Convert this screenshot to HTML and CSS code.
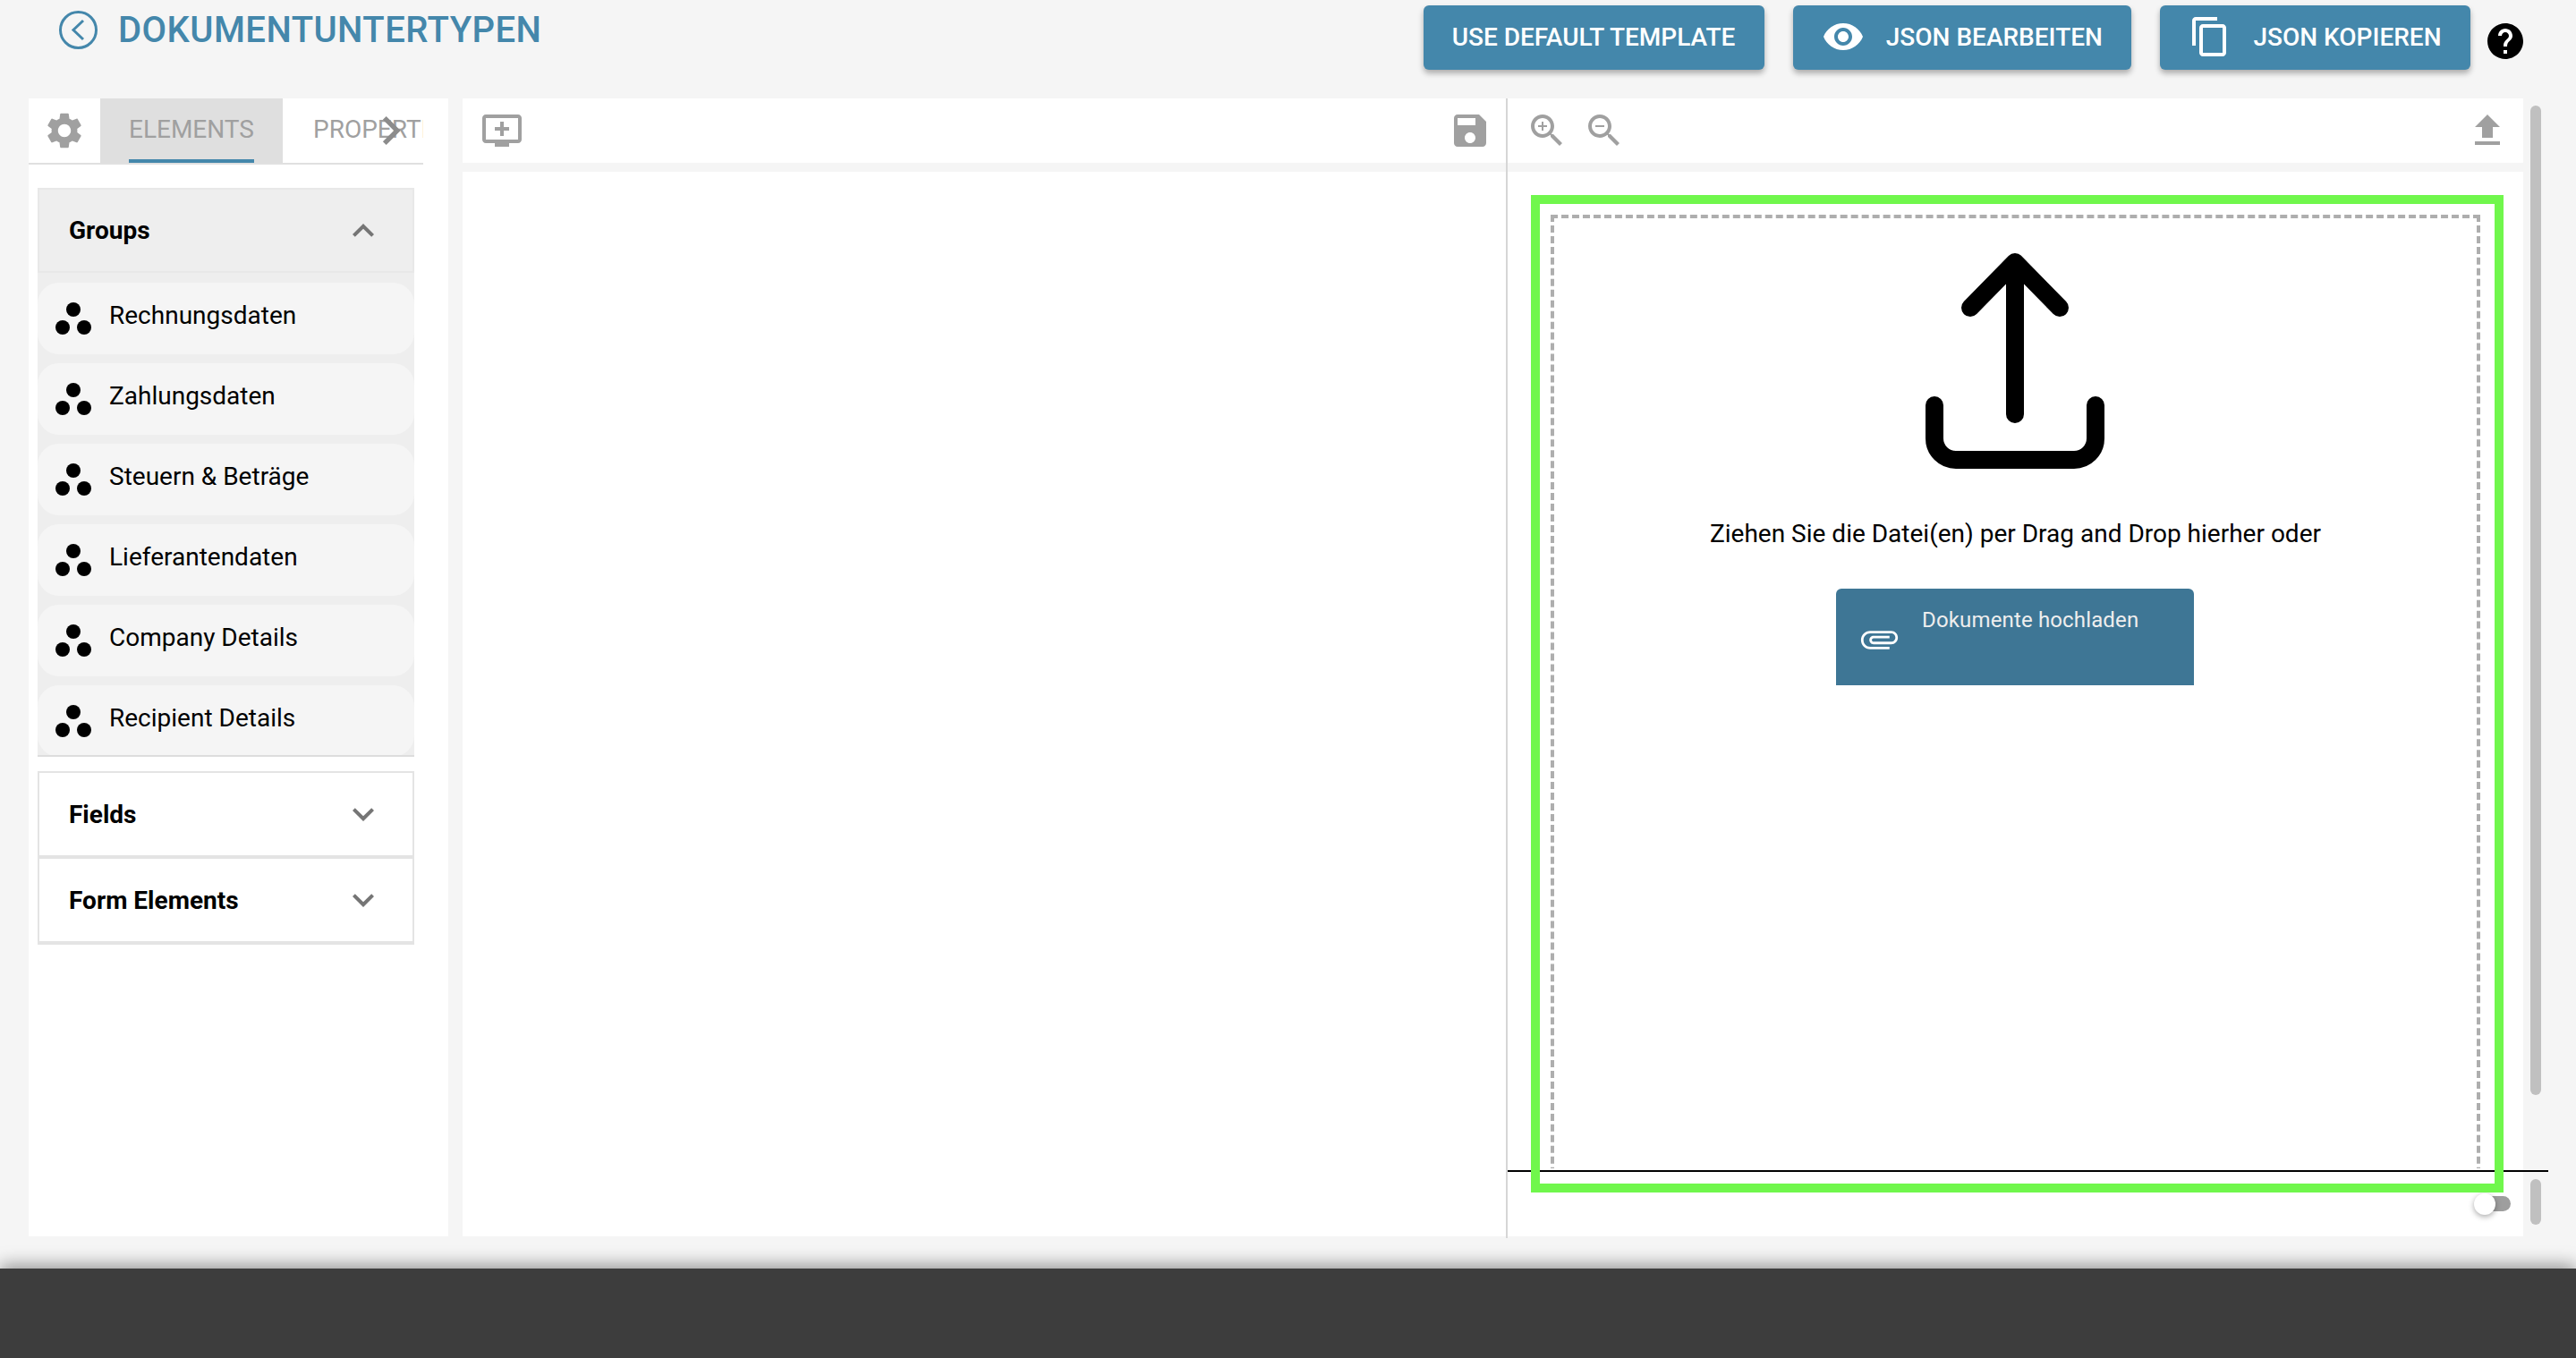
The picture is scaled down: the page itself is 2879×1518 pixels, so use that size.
FILE: index.html
```html
<!DOCTYPE html>
<html>
	<head>
		<meta charset="utf-8">
		<title>Dokumentuntertypen</title>
		<link rel="stylesheet" href="styles.css">
	</head>
	<body>
		<header class="topbar">
			<svg class="back-icon" viewBox="0 0 43 43"><circle cx="21.5" cy="21.5" r="20"/><path d="M27 11 16 21.500 27 32"/></svg>
			<h1 class="page-title">DOKUMENTUNTERTYPEN</h1>
			<div class="actions">
				<button class="action-btn">USE DEFAULT TEMPLATE</button>
				<button class="action-btn">
					<svg class="icon" viewBox="0 0 24 24"><path d="M12 4.500C7 4.500 2.730 7.610 1 12c1.730 4.390 6 7.500 11 7.500s9.270-3.110 11-7.500c-1.730-4.390-6-7.500-11-7.500zM12 17c-2.760 0-5-2.240-5-5s2.240-5 5-5 5 2.240 5 5-2.240 5-5 5zm0-8c-1.660 0-3 1.340-3 3s1.340 3 3 3 3-1.340 3-3-1.340-3-3-3z"/></svg>
					JSON BEARBEITEN
				</button>
				<button class="action-btn">
					<svg class="icon" viewBox="0 0 24 24"><path d="M16 1H4c-1.100 0-2 .9-2 2v14h2V3h12V1zm3 4H8c-1.100 0-2 .9-2 2v14c0 1.100.9 2 2 2h11c1.100 0 2-.9 2-2V7c0-1.100-.9-2-2-2zm0 16H8V7h11v14z"/></svg>
					JSON KOPIEREN
				</button>
			</div>
			<svg class="icon help-icon" viewBox="0 0 24 24"><circle cx="12" cy="12" r="7" fill="#fff"/><path d="M12 2C6.480 2 2 6.480 2 12s4.480 10 10 10 10-4.480 10-10S17.520 2 12 2zm1 17h-2v-2h2v2zm2.070-7.750l-.9.920C13.450 12.900 13 13.500 13 15h-2v-.5c0-1.100.45-2.100 1.170-2.830l1.240-1.260c.37-.36.59-.86.59-1.410 0-1.100-.9-2-2-2s-2 .9-2 2H8c0-2.210 1.790-4 4-4s4 1.790 4 4c0 .88-.36 1.680-.93 2.250z"/></svg>
		</header>

		<main class="workspace">
			<aside class="sidebar">
				<nav class="tabs">
					<span class="tab-gear">
						<svg class="icon" viewBox="0 0 24 24"><path d="M19.140 12.940c.04-.3.06-.61.06-.94 0-.32-.02-.64-.07-.94l2.030-1.580c.18-.14.23-.41.12-.61l-1.920-3.320c-.12-.22-.37-.29-.59-.22l-2.390.96c-.5-.38-1.030-.7-1.620-.94l-.36-2.540c-.04-.24-.24-.41-.48-.41h-3.840c-.24 0-.43.17-.47.41l-.36 2.540c-.59.24-1.130.57-1.620.94l-2.390-.96c-.22-.08-.47 0-.59.22L2.740 8.870c-.12.21-.08.47.12.61l2.030 1.580c-.05.3-.09.63-.09.94s.02.64.07.94l-2.030 1.580c-.18.14-.23.41-.12.61l1.920 3.320c.12.22.37.29.59.22l2.390-.96c.5.38 1.030.7 1.620.94l.36 2.540c.05.24.24.41.48.41h3.840c.24 0 .44-.17.47-.41l.36-2.540c.59-.24 1.130-.56 1.620-.94l2.390.96c.22.08.47 0 .59-.22l1.920-3.320c.12-.22.07-.47-.12-.61l-2.010-1.580zM12 15.600c-1.980 0-3.600-1.620-3.600-3.600s1.620-3.600 3.600-3.600 3.600 1.620 3.600 3.600-1.620 3.600-3.600 3.600z"/></svg>
					</span>
					<a class="tab tab-active"><span class="tab-label">ELEMENTS</span></a>
					<a class="tab tab-second"><span class="tab-label">PROPERTIES</span></a>
					<svg class="tabs-next" viewBox="0 0 24 24"><path d="M10 6 8.590 7.410 13.170 12l-4.580 4.590L10 18l6-6z"/></svg>
				</nav>

				<section class="group group-open">
					<div class="group-head">
						<span>Groups</span>
						<svg class="icon chevron" viewBox="0 0 24 24"><path d="M12 8l-6 6 1.410 1.410L12 10.830l4.590 4.580L18 14z"/></svg>
					</div>
					<ul class="group-list">
						<li class="group-item"><svg class="dots" viewBox="0 0 40 36"><circle cx="20" cy="8" r="8"/><circle cx="8" cy="28" r="8"/><circle cx="32" cy="28" r="8"/></svg>Rechnungsdaten</li>
						<li class="group-item"><svg class="dots" viewBox="0 0 40 36"><circle cx="20" cy="8" r="8"/><circle cx="8" cy="28" r="8"/><circle cx="32" cy="28" r="8"/></svg>Zahlungsdaten</li>
						<li class="group-item"><svg class="dots" viewBox="0 0 40 36"><circle cx="20" cy="8" r="8"/><circle cx="8" cy="28" r="8"/><circle cx="32" cy="28" r="8"/></svg>Steuern &amp; Beträge</li>
						<li class="group-item"><svg class="dots" viewBox="0 0 40 36"><circle cx="20" cy="8" r="8"/><circle cx="8" cy="28" r="8"/><circle cx="32" cy="28" r="8"/></svg>Lieferantendaten</li>
						<li class="group-item"><svg class="dots" viewBox="0 0 40 36"><circle cx="20" cy="8" r="8"/><circle cx="8" cy="28" r="8"/><circle cx="32" cy="28" r="8"/></svg>Company Details</li>
						<li class="group-item"><svg class="dots" viewBox="0 0 40 36"><circle cx="20" cy="8" r="8"/><circle cx="8" cy="28" r="8"/><circle cx="32" cy="28" r="8"/></svg>Recipient Details</li>
					</ul>
				</section>

				<section class="group group-closed group-fields">
					<div class="group-head">
						<span>Fields</span>
						<svg class="icon chevron" viewBox="0 0 24 24"><path d="M16.590 8.590 12 13.170 7.410 8.590 6 10l6 6 6-6z"/></svg>
					</div>
				</section>
				<section class="group group-closed">
					<div class="group-head">
						<span>Form Elements</span>
						<svg class="icon chevron" viewBox="0 0 24 24"><path d="M16.590 8.590 12 13.170 7.410 8.590 6 10l6 6 6-6z"/></svg>
					</div>
				</section>
			</aside>

			<section class="canvas">
				<div class="toolbar">
					<svg class="icon" viewBox="0 0 24 24"><path d="M21 3H3c-1.110 0-2 .89-2 2v12c0 1.100.89 2 2 2h5v2h8v-2h5c1.100 0 1.990-.9 1.990-2L23 5c0-1.110-.9-2-2-2zm0 14H3V5h18v12zm-5-7v2h-3v3h-2v-3H8v-2h3V7h2v3h3z"/></svg>
					<svg class="icon" viewBox="0 0 24 24"><path d="M17 3H5c-1.110 0-2 .9-2 2v14c0 1.100.89 2 2 2h14c1.100 0 2-.9 2-2V7l-4-4zm-5 16c-1.660 0-3-1.340-3-3s1.340-3 3-3 3 1.340 3 3-1.340 3-3 3zm3-10H5V5h10v4z"/></svg>
				</div>
				<div class="pane-body"></div>
			</section>
			<div class="divider"></div>

			<section class="preview">
				<div class="toolbar">
					<div class="zoom-tools">
						<svg class="icon" viewBox="0 0 24 24"><path d="M15.500 14h-.79l-.28-.27C15.410 12.590 16 11.110 16 9.500 16 5.910 13.090 3 9.500 3S3 5.910 3 9.500 5.910 16 9.500 16c1.610 0 3.090-.59 4.230-1.570l.27.28v.79l5 4.990L20.490 19l-4.990-5zm-6 0C7.010 14 5 11.990 5 9.500S7.010 5 9.500 5 14 7.010 14 9.500 11.990 14 9.500 14z"/><path d="M12 10h-2v2H9v-2H7V9h2V7h1v2h2v1z"/></svg>
						<svg class="icon" viewBox="0 0 24 24"><path d="M15.500 14h-.79l-.28-.27C15.410 12.590 16 11.110 16 9.500 16 5.910 13.090 3 9.500 3S3 5.910 3 9.500 5.910 16 9.500 16c1.610 0 3.090-.59 4.230-1.570l.27.28v.79l5 4.990L20.490 19l-4.990-5zm-6 0C7.010 14 5 11.990 5 9.500S7.010 5 9.500 5 14 7.010 14 9.500 11.990 14 9.500 14z"/><path d="M7 9h5v1H7z"/></svg>
					</div>
					<svg class="icon" viewBox="0 0 24 24"><path d="M9 16h6v-6h4l-7-7-7 7h4zm-4 2h14v2H5z"/></svg>
				</div>
				<div class="preview-scroll">
					<div class="dropzone">
						<svg class="upload-icon" viewBox="0 0 200 241"><path d="M100 180V10M50 61 100 10 150 61M10 170V207a24 24 0 0 0 24 24H166a24 24 0 0 0 24-24V170"/></svg>
						<p class="drop-text">Ziehen Sie die Datei(en) per Drag and Drop hierher oder</p>
						<button class="upload-btn">
							<svg class="clip-icon" viewBox="0 0 24 24"><path transform="rotate(90 12 12)" d="M16.500 6v11.500c0 2.210-1.790 4-4 4s-4-1.790-4-4V5c0-1.380 1.120-2.500 2.500-2.500s2.500 1.120 2.500 2.500v10.500c0 .55-.45 1-1 1s-1-.45-1-1V6H10v9.500c0 1.380 1.120 2.500 2.500 2.500s2.500-1.120 2.500-2.500V5c0-2.210-1.790-4-4-4S7 2.790 7 5v12.500c0 3.040 2.460 5.500 5.500 5.500s5.500-2.460 5.500-5.500V6h-1.500z"/></svg>
							<span>Dokumente hochladen</span>
						</button>
					</div>
				</div>
				<div class="preview-foot">
					<span class="toggle"><span class="toggle-track"></span><span class="toggle-thumb"></span></span>
				</div>
				<div class="page-line"></div>
				<div class="highlight"></div>
			</section>

			<div class="scroll-rail">
				<span class="scroll-thumb scroll-thumb-main"></span>
				<span class="scroll-thumb scroll-thumb-small"></span>
			</div>
		</main>

		<footer class="bottom-bar"></footer>
	</body>
</html>
```

FILE: styles.css
```css
* {
	box-sizing: border-box;
}
body {
	margin: 0;
	height: 1518px;
	overflow: hidden;
	background: #f5f5f5;
	font-family: Roboto, "Liberation Sans", sans-serif;
	font-size: 28px;
	color: #000;
}
.icon {
	display: block;
	flex: none;
	width: 48px;
	height: 48px;
	fill: #a0a0a0;
}

/* top bar */
.topbar {
	display: flex;
	align-items: flex-start;
	height: 110px;
	padding: 0 55px 0 66px;
}
.back-icon {
	flex: none;
	width: 43px;
	height: 43px;
	margin-top: 12px;
	fill: none;
	stroke: #4487ab;
	stroke-width: 3;
}
.page-title {
	margin: 10px 0 0 23px;
	font-size: 40px;
	line-height: 48px;
	font-weight: 500;
	letter-spacing: 0.45px;
	color: #4487ab;
}
.actions {
	display: flex;
	gap: 32px;
	margin: 6px 0 0 auto;
}
.action-btn {
	display: flex;
	align-items: center;
	gap: 24px;
	height: 72px;
	padding: 0 32.5px 2px 32px;
	border: 0;
	border-radius: 6px;
	background: #4487ab;
	color: #fff;
	font: 500 28px Roboto, sans-serif;
	box-shadow: 0 4px 6px rgba(0, 0, 0, 0.3);
}
.action-btn .icon {
	fill: #fff;
}
.help-icon {
	margin: 22px 0 0 15px;
	fill: #000;
}

/* main columns */
.workspace {
	display: flex;
	height: 1272px;
	padding-left: 32px;
}
.sidebar {
	flex: none;
	width: 469px;
	margin-right: 16px;
	background: #fff;
}
.tabs {
	position: relative;
	display: flex;
	width: 441px;
	height: 74px;
	overflow: hidden;
	border-bottom: 2px solid #e0e0e0;
}
.tab-gear {
	flex: none;
	width: 80px;
	padding: 12px 0 0 16px;
}
.tab {
	flex: none;
	height: 72px;
	padding: 0 32px;
	color: #a0a0a0;
	line-height: 70px;
}
.tab-label {
	display: block;
	height: 72px;
}
.tab-active {
	background: #dfdfdf;
}
.tab-active .tab-label {
	border-bottom: 4px solid #4487ab;
}
.tab-second {
	padding-left: 34px;
}
.tabs-next {
	position: absolute;
	left: 373px;
	top: 4px;
	width: 64px;
	height: 64px;
	fill: #8c8c8c;
}

/* accordion */
.group {
	width: 421px;
	margin-left: 10px;
}
.group-open {
	margin-top: 26px;
	background: #eee;
	border-bottom: 2px solid #ddd;
}
.group-head {
	display: flex;
	align-items: center;
	justify-content: space-between;
	padding: 0 31px 0 33px;
	font-weight: 700;
}
.group-open .group-head {
	height: 95px;
	border: 2px solid #e8e8e8;
}
.group-closed {
	border: 2px solid #e4e4e4;
	border-top: 0;
	border-bottom-width: 4px;
}
.group-closed .group-head {
	height: 92px;
}
.group-fields {
	margin-top: 16px;
	border-top: 2px solid #e4e4e4;
}
.chevron {
	fill: #757575;
}
.group-list {
	display: flex;
	flex-direction: column;
	gap: 10px;
	height: 539px;
	margin: 0;
	padding: 11px 0 0;
	overflow: hidden;
	list-style: none;
}
.group-item {
	display: flex;
	flex: none;
	gap: 20px;
	height: 80px;
	padding: 17px 0 0 20px;
	border-radius: 24px;
	background: #f5f5f5;
	line-height: 40px;
}
.dots {
	flex: none;
	width: 40px;
	height: 36px;
	margin-top: 5px;
}

/* middle pane */
.canvas {
	flex: none;
	display: flex;
	flex-direction: column;
	width: 1166px;
}
.toolbar {
	flex: none;
	display: flex;
	align-items: center;
	justify-content: space-between;
	height: 72px;
	margin-bottom: 10px;
	padding: 0 16px 0 20px;
	background: #fff;
}
.pane-body {
	flex: 1;
	background: #fff;
}
.divider {
	flex: none;
	width: 2px;
	height: 1274px;
	background: #d6d6d6;
}

/* right pane */
.preview {
	position: relative;
	flex: none;
	display: flex;
	flex-direction: column;
	width: 1135px;
}
.zoom-tools {
	display: flex;
	gap: 16px;
}
.preview-scroll {
	flex: none;
	height: 1114px;
	padding: 48px 48px 0;
	overflow: hidden;
	background: #fff;
}
.dropzone {
	display: flex;
	flex-direction: column;
	align-items: center;
	height: 1300px;
	padding: 39px 1px 0 0;
	border: 4px dashed #aeaeae;
}
.upload-icon {
	display: block;
	flex: none;
	width: 200px;
	height: 241px;
	fill: none;
	stroke: #000;
	stroke-width: 20;
	stroke-linecap: round;
	stroke-linejoin: round;
}
.drop-text {
	margin: 53px 0 0 1px;
	line-height: 40px;
}
.upload-btn {
	display: flex;
	align-items: flex-start;
	flex: none;
	gap: 25px;
	width: 400px;
	height: 108px;
	margin-top: 41px;
	padding: 20px 0 0 26px;
	border: 0;
	border-radius: 6px 6px 0 0;
	background: #3e7695;
	color: #eee;
	font: 400 24px/30px Roboto, sans-serif;
	letter-spacing: 0.15px;
}
.clip-icon {
	flex: none;
	width: 45px;
	height: 45px;
	margin-top: 14px;
	fill: #fff;
}
.preview-foot {
	flex: 1;
	display: flex;
	justify-content: flex-end;
	padding: 28px 14px 0 0;
	background: #fff;
}
.toggle {
	position: relative;
	display: block;
	width: 41px;
	height: 24px;
}
.toggle-track {
	position: absolute;
	top: 3px;
	left: 7px;
	right: 0;
	height: 17px;
	border-radius: 9px;
	background: #9e9e9e;
}
.toggle-thumb {
	position: absolute;
	top: 0;
	left: 0;
	width: 24px;
	height: 24px;
	border-radius: 50%;
	background: #fff;
	box-shadow: 0 2px 6px rgba(0, 0, 0, 0.35);
}

/* things drawn over the preview */
.page-line {
	position: absolute;
	top: 1198px;
	left: 0;
	right: -28px;
	height: 2px;
	background: #000;
}
.highlight {
	position: absolute;
	top: 108px;
	left: 26px;
	width: 1087px;
	height: 1115px;
	border: 10px solid #70f74c;
}

/* scrollbars */
.scroll-rail {
	flex: none;
	display: flex;
	flex-direction: column;
	width: 12px;
	margin-left: 8px;
	padding-top: 8px;
}
.scroll-thumb {
	display: block;
	border-radius: 6px;
	background: #c0c0c0;
}
.scroll-thumb-main {
	height: 1106px;
}
.scroll-thumb-small {
	height: 51px;
	margin-top: 94px;
}

.bottom-bar {
	height: 100px;
	margin-top: 36px;
	background: #3d3d3d;
	box-shadow: 0 -4px 18px rgba(0, 0, 0, 0.4);
}
```
